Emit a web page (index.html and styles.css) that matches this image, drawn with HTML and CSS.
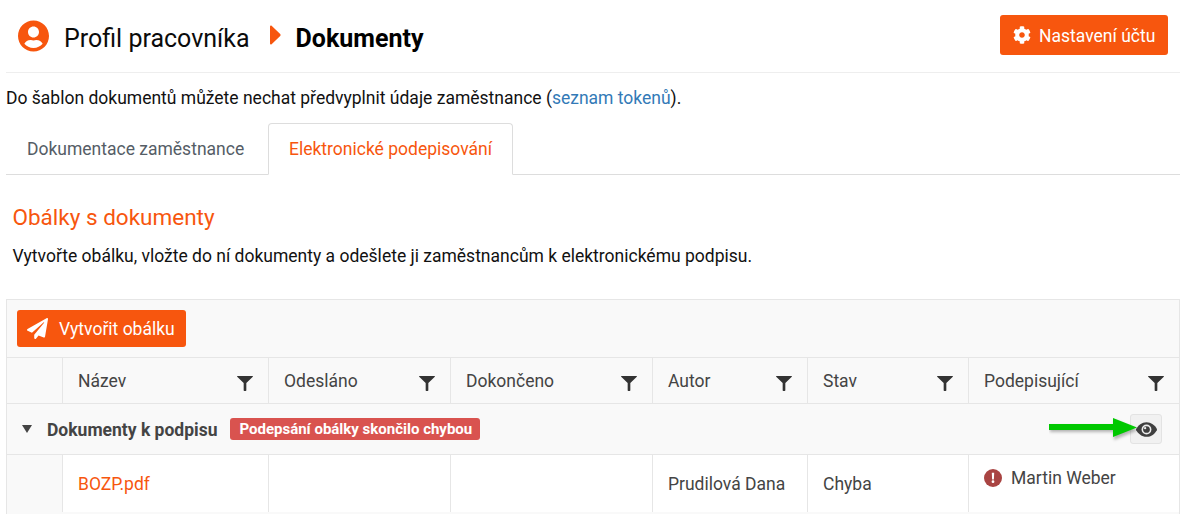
FILE: index.html
```html
<!DOCTYPE html>
<html lang="cs">
<head>
<meta charset="utf-8">
<title>Dokumenty</title>
<link rel="stylesheet" href="styles.css">
</head>
<body>
<header class="page-head">
  <div class="crumbs">
    <svg class="i-user" viewBox="0 0 496 512"><path fill="currentColor" d="M248 8C111 8 0 119 0 256s111 248 248 248 248-111 248-248S385 8 248 8zm0 96c48.600 0 88 39.400 88 88s-39.400 88-88 88-88-39.400-88-88 39.400-88 88-88zm0 344c-58.700 0-111.300-26.600-146.500-68.200 18.800-35.400 55.600-59.800 98.500-59.800 2.400 0 4.800.4 7.100 1.100 13 4.200 26.600 6.900 40.900 6.900 14.300 0 28-2.700 40.900-6.900 2.300-.7 4.700-1.100 7.100-1.100 42.900 0 79.700 24.400 98.500 59.800C359.300 421.400 306.700 448 248 448z"/></svg>
    <span class="crumb">Profil pracovníka</span>
    <svg class="i-caret" viewBox="0 0 12 20"><path fill="currentColor" d="M1 1.500C1 .6 1.900.2 2.600.8l8.600 8.300c.5.500.5 1.300 0 1.800l-8.600 8.300c-.7.600-1.600.2-1.600-.7z"/></svg>
    <strong class="crumb-current">Dokumenty</strong>
  </div>
  <a class="btn btn-account" href="#">
    <svg class="i-gear" viewBox="0 0 512 512"><path fill="currentColor" d="M487.400 315.700l-42.600-24.600c4.300-23.200 4.300-47 0-70.200l42.600-24.600c4.900-2.800 7.100-8.600 5.500-14-11.100-35.600-30-67.800-54.700-94.600-3.800-4.100-10-5.100-14.800-2.300L380.800 110c-17.900-15.400-38.500-27.300-60.800-35.100V25.800c0-5.600-3.900-10.500-9.400-11.700-36.700-8.200-74.300-7.800-109.200 0-5.500 1.200-9.400 6.100-9.400 11.700V75c-22.200 7.900-42.800 19.800-60.800 35.100L88.700 85.500c-4.900-2.800-11-1.900-14.800 2.300-24.700 26.700-43.600 58.900-54.700 94.600-1.700 5.400.6 11.200 5.500 14L67.300 221c-4.300 23.200-4.300 47 0 70.200l-42.600 24.600c-4.900 2.800-7.100 8.600-5.500 14 11.100 35.600 30 67.800 54.700 94.600 3.800 4.100 10 5.100 14.800 2.300l42.600-24.600c17.900 15.400 38.500 27.300 60.800 35.100v49.200c0 5.600 3.900 10.500 9.400 11.700 36.700 8.200 74.300 7.800 109.200 0 5.500-1.200 9.400-6.100 9.400-11.700v-49.200c22.200-7.900 42.800-19.800 60.800-35.100l42.600 24.600c4.900 2.800 11 1.900 14.800-2.300 24.700-26.700 43.600-58.900 54.700-94.600 1.500-5.500-.7-11.300-5.600-14.100zM256 336c-44.100 0-80-35.900-80-80s35.900-80 80-80 80 35.900 80 80-35.900 80-80 80z"/></svg>
    <span class="btn-label">Nastavení účtu</span>
  </a>
</header>

<p class="intro">Do šablon dokumentů můžete nechat předvyplnit údaje zaměstnance (<a href="#">seznam tokenů</a>).</p>

<nav class="tabs">
  <a class="tab" href="#">Dokumentace zaměstnance</a>
  <a class="tab tab-active" href="#">Elektronické podepisování</a>
</nav>

<section class="lead">
  <h2>Obálky s dokumenty</h2>
  <p>Vytvořte obálku, vložte do ní dokumenty a odešlete ji zaměstnancům k elektronickému podpisu.</p>
</section>

<section class="grid">
  <div class="toolbar">
    <a class="btn btn-create" href="#">
      <svg class="i-plane" viewBox="0 0 512 512"><path fill="currentColor" d="M476 3.200L12.500 270.600c-18.100 10.400-15.800 35.600 2.200 43.200L121 358.400l287.300-253.200c5.500-4.900 13.300 2.600 8.600 8.300L176 407v80.500c0 23.600 28.500 32.900 42.500 15.800L282 426l124.600 52.200c14.200 6 30.400-2.900 33-18.200l72-432C515 7.800 493.300-6.800 476 3.200z"/></svg>
      Vytvořit obálku
    </a>
  </div>

  <div class="row row-head">
    <div class="cell"></div>
    <div class="cell">Název<svg class="i-filter" viewBox="0 0 18 17"><path fill="currentColor" d="M.6 0h16.800c.5 0 .8.600.4 1L10.500 8v8.500c0 .4-.4.500-.8.500h-1.400c-.4 0-.8-.1-.8-.5V8L.2 1C-.2.600.1 0 .6 0z"/></svg></div>
    <div class="cell">Odesláno<svg class="i-filter" viewBox="0 0 18 17"><path fill="currentColor" d="M.6 0h16.800c.5 0 .8.600.4 1L10.500 8v8.500c0 .4-.4.500-.8.500h-1.400c-.4 0-.8-.1-.8-.5V8L.2 1C-.2.600.1 0 .6 0z"/></svg></div>
    <div class="cell">Dokončeno<svg class="i-filter" viewBox="0 0 18 17"><path fill="currentColor" d="M.6 0h16.800c.5 0 .8.600.4 1L10.500 8v8.500c0 .4-.4.500-.8.500h-1.400c-.4 0-.8-.1-.8-.5V8L.2 1C-.2.600.1 0 .6 0z"/></svg></div>
    <div class="cell">Autor<svg class="i-filter" viewBox="0 0 18 17"><path fill="currentColor" d="M.6 0h16.800c.5 0 .8.600.4 1L10.500 8v8.500c0 .4-.4.500-.8.500h-1.400c-.4 0-.8-.1-.8-.5V8L.2 1C-.2.600.1 0 .6 0z"/></svg></div>
    <div class="cell">Stav<svg class="i-filter" viewBox="0 0 18 17"><path fill="currentColor" d="M.6 0h16.800c.5 0 .8.600.4 1L10.500 8v8.500c0 .4-.4.500-.8.500h-1.400c-.4 0-.8-.1-.8-.5V8L.2 1C-.2.600.1 0 .6 0z"/></svg></div>
    <div class="cell">Podepisující<svg class="i-filter" viewBox="0 0 18 17"><path fill="currentColor" d="M.6 0h16.800c.5 0 .8.600.4 1L10.500 8v8.500c0 .4-.4.500-.8.500h-1.400c-.4 0-.8-.1-.8-.5V8L.2 1C-.2.600.1 0 .6 0z"/></svg></div>
  </div>

  <div class="group">
    <svg class="i-tri" viewBox="0 0 10 8"><path fill="currentColor" d="M0 0h10L5 8z"/></svg>
    <strong class="group-name">Dokumenty k podpisu</strong>
    <span class="badge">Podepsání obálky skončilo chybou</span>
    <button class="eye-btn" type="button">
      <svg class="i-eye" viewBox="0 0 20 14"><path fill="currentColor" d="M10 0c4.500 0 8 3 9.800 6.300.2.400.2.900 0 1.300C18 11 14.500 14 10 14S2 11 .2 7.700a1.400 1.400 0 0 1 0-1.300C2 3 5.500 0 10 0z"/><circle cx="10" cy="7" r="4.700" fill="#eee"/><circle cx="10" cy="7" r="3.200" fill="currentColor"/><circle cx="8.700" cy="5.700" r="1.100" fill="#eee"/></svg>
    </button>
    <svg class="arrow" viewBox="0 0 96 30"><path class="arrow-shadow" d="M1 11h64V5l24 10-24 10v-8H1z"/><path class="arrow-fill" d="M0 9h64V3l24 9.500L64 22v-7H0z"/></svg>
  </div>

  <div class="row row-data">
    <div class="cell cell-blank"></div>
    <div class="cell"><a class="doc-link" href="#">BOZP.pdf</a></div>
    <div class="cell"></div>
    <div class="cell"></div>
    <div class="cell">Prudilová Dana</div>
    <div class="cell">Chyba</div>
    <div class="cell cell-signer">
      <svg class="i-alert" viewBox="0 0 18 18"><circle cx="9" cy="9" r="9" fill="currentColor"/><path fill="#fff" d="M7.800 3.800h2.400l-.3 6.600H8.100zM9 11.300a1.400 1.400 0 1 1 0 2.800 1.400 1.400 0 0 1 0-2.800z"/></svg>
      <span class="signer-name">Martin Weber</span>
    </div>
  </div>
</section>
</body>
</html>
```
FILE: styles.css
```css
* { box-sizing: border-box; }
html, body { margin: 0; height: 514px; overflow: hidden; }
body {
  background: #fff;
  padding: 0 8px 0 6px;
  font-family: Roboto, "Liberation Sans", sans-serif;
  font-size: 17.500px;
  color: #000;
}
a { text-decoration: none; }
svg { display: block; flex: none; }

.page-head {
  height: 73px;
  padding: 15px 12px 0 12px;
  border-bottom: 1px solid #eeeeee;
  display: flex;
  justify-content: space-between;
  align-items: flex-start;
}
.crumbs { display: flex; align-items: center; height: 46px; }
.i-user { width: 31px; height: 32px; color: #f7560e; margin-top: -5px; }
.crumb { font-size: 25px; margin-left: 15px; color: #0b0b0b; }
.i-caret { width: 12px; height: 20px; color: #f7560e; margin: -6px 0 0 19px; }
.crumb-current { font-size: 25px; font-weight: 700; margin-left: 15px; }

.btn {
  display: flex;
  align-items: center;
  background: #f7560e;
  color: #fff;
  border-radius: 3px;
}
.btn-account { height: 40px; width: 168px; padding-left: 13px; gap: 8px; }
.btn-label { padding-top: 2px; }
.i-gear { width: 18px; height: 18px; }

.intro { margin: 15px 0 0; height: 20px; line-height: 20px; color: #111; }
.intro a { color: #337ab7; }

.tabs {
  margin-top: 15px;
  height: 52px;
  display: flex;
  border-bottom: 1px solid #dddddd;
}
.tab {
  display: flex;
  align-items: center;
  height: 52px;
  padding: 0 20px;
  color: #555d66;
  border: 1px solid transparent;
}
.tab:first-child { width: 262px; }
.tab-active {
  width: 245px;
  color: #f7560e;
  background: #fff;
  border-color: #dddddd;
  border-bottom-color: #fff;
  border-radius: 4px 4px 0 0;
}

.lead { padding: 29px 6.500px 0; }
.lead h2 { margin: 0; font-size: 22.500px; line-height: 26px; font-weight: 400; color: #f7560e; }
.lead p { margin: 15px 0 0; line-height: 22px; color: #111; }

.grid {
  margin-top: 32px;
  border: 1px solid #e6e6e6;
  border-bottom: 0;
  background: #f9f9f9;
  height: 216px;
  color: #444;
}
.toolbar { height: 58px; padding: 10px; border-bottom: 1px solid #e6e6e6; }
.btn-create { width: 169px; height: 37px; padding-left: 10px; gap: 11px; }
.i-plane { width: 21px; height: 21px; }

.row {
  display: grid;
  grid-template-columns: 55px 206px 182px 202px 155px 161px 1fr;
}
.cell {
  display: flex;
  align-items: center;
  justify-content: space-between;
  padding: 0 15px;
  border-left: 1px solid #e6e6e6;
}
.cell:first-child { border-left: 0; }
.row-head { height: 46px; border-bottom: 1px solid #e6e6e6; }
.i-filter { width: 16px; height: 17px; color: #333; margin: 5px 0 0 0; }

.group {
  position: relative;
  height: 51px;
  display: flex;
  align-items: center;
  padding: 0 17px 0 15px;
  border-bottom: 1px solid #e6e6e6;
}
.i-tri { width: 10px; height: 8px; color: #444; }
.group-name { margin: 2px 0 0 15px; font-weight: 700; }
.badge {
  margin-left: 13px;
  background: #d9534f;
  color: #fff;
  font-size: 15px;
  font-weight: 700;
  line-height: 22px;
  height: 22px;
  padding: 0 8px 0 9px;
  border-radius: 3px;
}
.eye-btn {
  margin-left: auto;
  width: 32px;
  height: 30px;
  padding: 0;
  display: flex;
  align-items: center;
  justify-content: center;
  background: #f1f1f1;
  border: 1px solid #e3e3e3;
  border-radius: 3px;
}
.i-eye { width: 21px; height: 15px; color: #3f3f3f; }
.arrow { position: absolute; left: 1042px; top: 11px; width: 96px; height: 30px; }
.arrow-shadow { fill: rgba(0, 0, 0, .28); filter: blur(1.500px); }
.arrow-fill { fill: #00c800; }

.row-data { height: 57px; background: #fff; }
.row-data .cell { justify-content: flex-start; }
.cell-blank { background: #f9f9f9; }
.doc-link { color: #f7560e; }
.cell-signer { align-items: flex-start; padding-top: 12px; gap: 9px; }
.signer-name { padding-top: 1px; }
.i-alert { width: 18px; height: 18px; color: #a94442; margin-top: 2px; }
```
